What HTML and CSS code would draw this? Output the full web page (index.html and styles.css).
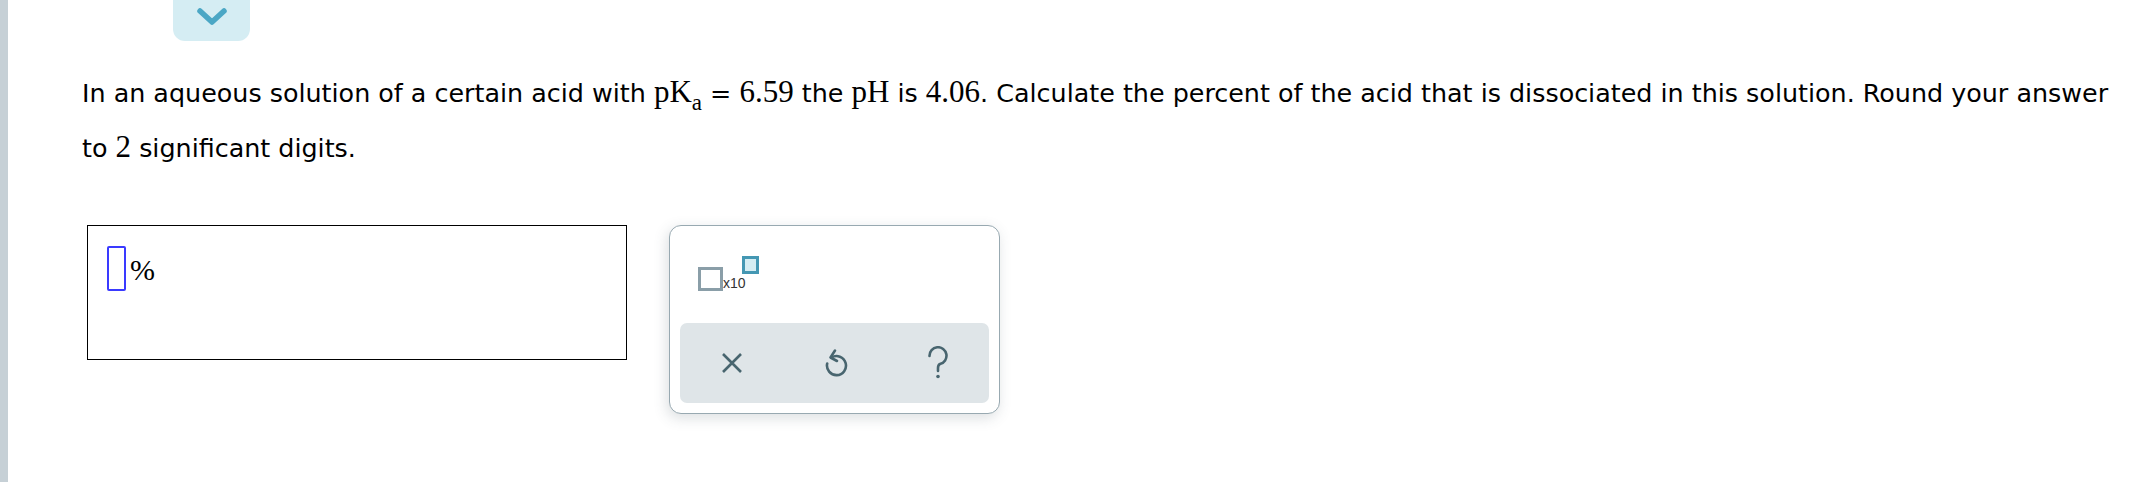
FILE: index.html
```html
<!DOCTYPE html>
<html lang="en">

<head>
    <meta charset="UTF-8">
    <title>Question</title>
    <link rel="stylesheet" href="styles.css">
</head>

<body>
    <div class="page">
        <div class="rail"></div>
        <div class="main">
            <!-- collapse tab -->
            <div class="tab">
                <svg width="32" height="20" viewBox="0 0 32 20">
                    <path d="M4 4 L16 15 L28 4" fill="none" stroke="#4ba7c5" stroke-width="5.5" stroke-linecap="round" stroke-linejoin="round" />
                </svg>
            </div>

            <p class="question">
                In an aqueous solution of a certain acid with <span class="math">pK<sub>a</sub></span> = <span class="math">6.59</span>
                the <span class="math">pH</span> is <span class="math">4.06</span>. Calculate the percent of the acid that is dissociated
                in this solution. Round your answer to <span class="math">2</span> significant digits.
            </p>

            <div class="answer-row">
                <div class="answer-box">
                    <span class="cursor"></span><span class="unit">%</span>
                </div>

                <div class="keypad">
                    <div class="templates">
                        <div class="sci">
                            <span class="slot"></span><span class="x10">x10</span><span class="exp"></span>
                        </div>
                    </div>
                    <div class="actions">
                        <!-- clear -->
                        <div class="action">
                            <svg width="24" height="22" viewBox="0 0 24 22">
                                <path d="M3 2 L21 20 M21 2 L3 20" stroke="#48656f" stroke-width="2.6" fill="none" />
                            </svg>
                        </div>
                        <!-- undo -->
                        <div class="action">
                            <svg width="26" height="32" viewBox="0 0 26 32">
                                <path d="M9.5 10.5 A9.5 9.5 0 1 1 5.2 16.5" stroke="#48656f" stroke-width="2.6" fill="none" stroke-linecap="round" />
                                <path d="M13 3.5 L8.5 10.5 L15 14" stroke="#48656f" stroke-width="2.6" fill="none" stroke-linecap="round" stroke-linejoin="round" />
                            </svg>
                        </div>
                        <!-- help -->
                        <div class="action">
                            <svg width="24" height="34" viewBox="0 0 24 34">
                                <path d="M3.5 10 A8.5 8.5 0 1 1 14 18 Q12 19 12 22 L12 25" stroke="#48656f" stroke-width="2.6" fill="none" stroke-linecap="round" />
                                <circle cx="12" cy="30.5" r="1.8" fill="#48656f" />
                            </svg>
                        </div>
                    </div>
                </div>
            </div>
        </div>
    </div>
</body>

</html>
```

FILE: styles.css
```css
html,
body {
    margin: 0;
    height: 100%;
    background: #fff;
    color: #000;
}

* {
    box-sizing: border-box;
}

.page {
    display: flex;
    height: 100vh;
}

.rail {
    width: 8px;
    flex-shrink: 0;
    background: #c6d0d6;
}

.main {
    flex-grow: 1;
    padding-left: 74px;
}

.tab {
    width: 77px;
    height: 41px;
    margin-left: 91px;
    background: #d5edf3;
    border-radius: 0 0 12px 12px;
    display: flex;
    justify-content: center;
    padding-top: 7px;
}

.question {
    margin: 24px 0 0;
    width: 2040px;
    font-family: "DejaVu Sans", sans-serif;
    font-size: 25.4px;
    line-height: 54px;
}

.math {
    font-family: "Liberation Serif", serif;
    font-size: 31px;
}

.math sub {
    font-size: 23px;
    vertical-align: -8px;
    line-height: 0;
}

.answer-row {
    display: flex;
    align-items: flex-start;
    gap: 42px;
    margin-top: 50px;
    padding-left: 5px;
}

.answer-box {
    width: 540px;
    height: 135px;
    border: 1.5px solid #000;
    padding: 20px 0 0 19px;
    display: flex;
    align-items: flex-start;
}

.cursor {
    width: 19px;
    height: 45px;
    border: 2px solid #3a3aff;
    border-radius: 2px;
}

.unit {
    font-family: "Liberation Serif", serif;
    font-size: 30px;
    line-height: 1;
    margin: 9px 0 0 4px;
}

.keypad {
    width: 331px;
    height: 189px;
    border: 1px solid #98a9b1;
    border-radius: 12px;
    background: #fff;
    box-shadow: -2px 4px 14px rgba(60, 80, 90, 0.18);
    padding: 0 10px 10px;
    display: flex;
    flex-direction: column;
}

.templates {
    flex-grow: 1;
    padding: 30px 0 0 18px;
}

.sci {
    display: flex;
    align-items: flex-start;
}

.slot {
    margin-top: 11px;
    width: 25px;
    height: 24px;
    border: 3px solid #8a9ea8;
}

.x10 {
    margin-top: 19px;
    font-family: "Liberation Sans", sans-serif;
    font-size: 14px;
    color: #333;
}

.exp {
    width: 17px;
    height: 18px;
    margin-left: -4px;
    border: 3px solid #4497b3;
    background: #d5edf3;
}

.actions {
    height: 80px;
    background: #dfe5e8;
    border-radius: 7px;
    display: flex;
}

.action {
    flex: 1;
    display: flex;
    align-items: center;
    justify-content: center;
}
```
